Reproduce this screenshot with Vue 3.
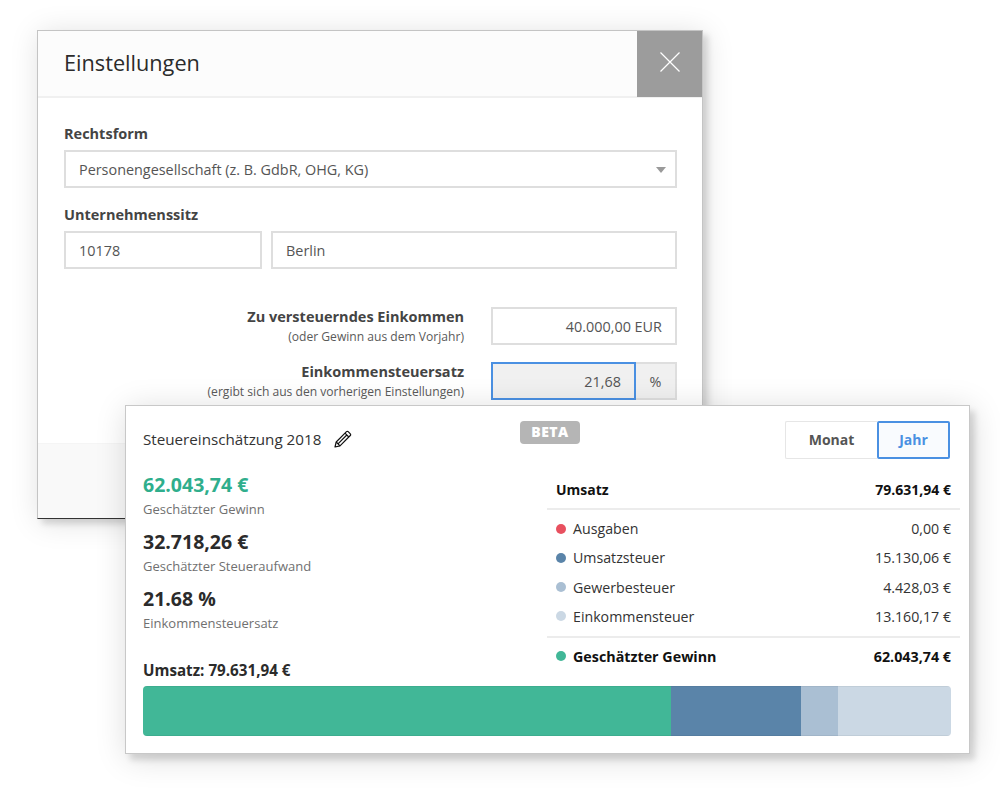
<script setup>
const rows = [
  { label: 'Ausgaben', value: '0,00 €', color: '#e8505f' },
  { label: 'Umsatzsteuer', value: '15.130,06 €', color: '#5a84a9' },
  { label: 'Gewerbesteuer', value: '4.428,03 €', color: '#aabfd3' },
  { label: 'Einkommensteuer', value: '13.160,17 €', color: '#cbd8e4' },
]
const stats = [
  { value: '62.043,74 €', label: 'Geschätzter Gewinn', green: true },
  { value: '32.718,26 €', label: 'Geschätzter Steueraufwand' },
  { value: '21.68 %', label: 'Einkommensteuersatz' },
]
const segments = [
  { w: 528, color: '#41b797' },
  { w: 130, color: '#5a84a9' },
  { w: 37, color: '#aabfd3' },
  { w: 113, color: '#cbd8e4' },
]
</script>

<template>
  <div class="stage">
    <section class="modal">
      <header class="modal-head">
        <h1>Einstellungen</h1>
        <div class="close">
          <svg width="20" height="20" viewBox="0 0 20 20"><path d="M.5.5l19 19M19.500.5l-19 19" stroke="#fff" stroke-width="1.200" fill="none" /></svg>
        </div>
      </header>
      <div class="modal-body">
        <label class="lab">Rechtsform</label>
        <div class="field select">
          <span>Personengesellschaft (z. B. GdbR, OHG, KG)</span>
          <i class="caret"></i>
        </div>
        <label class="lab second">Unternehmenssitz</label>
        <div class="addr">
          <div class="field zip">10178</div>
          <div class="field city">Berlin</div>
        </div>
        <div class="line first">
          <div class="desc"><b>Zu versteuerndes Einkommen</b><small>(oder Gewinn aus dem Vorjahr)</small></div>
          <div class="field amount">40.000,00 EUR</div>
        </div>
        <div class="line">
          <div class="desc"><b>Einkommensteuersatz</b><small>(ergibt sich aus den vorherigen Einstellungen)</small></div>
          <div class="combo">
            <div class="rate">21,68</div>
            <div class="unit">%</div>
          </div>
        </div>
      </div>
      <div class="modal-foot"></div>
    </section>

    <section class="card">
      <div class="card-top">
        <div class="title">
          <span>Steuereinschätzung 2018</span>
          <svg width="18" height="18" viewBox="0 0 18 18" fill="none" stroke="#111" stroke-width="1.200" stroke-linejoin="round">
            <path d="M1 17l1.200-5L12.500 1.700a1.200 1.200 0 0 1 1.700 0l2.100 2.100a1.200 1.200 0 0 1 0 1.700L6 15.800z" />
            <path d="M2.200 12L6 15.800M11 3.200l3.800 3.800M4 13.800l8.800-8.800" />
          </svg>
        </div>
        <span class="beta">BETA</span>
        <div class="toggle">
          <span class="opt">Monat</span>
          <span class="opt active">Jahr</span>
        </div>
      </div>
      <div class="card-main">
        <div class="stats">
          <div v-for="s in stats" :key="s.label" class="stat">
            <strong :class="{ green: s.green }">{{ s.value }}</strong>
            <span>{{ s.label }}</span>
          </div>
          <div class="bar-label">Umsatz: 79.631,94 €</div>
        </div>
        <div class="table">
          <div class="row total"><span>Umsatz</span><span>79.631,94 €</span></div>
          <div class="group">
            <div v-for="r in rows" :key="r.label" class="row">
              <span class="name"><i class="dot" :style="{ background: r.color }"></i>{{ r.label }}</span>
              <span>{{ r.value }}</span>
            </div>
          </div>
          <div class="row profit">
            <span class="name"><i class="dot dot-profit"></i>Geschätzter Gewinn</span>
            <span>62.043,74 €</span>
          </div>
        </div>
      </div>
      <div class="bar">
        <i v-for="s in segments" :key="s.color" :style="{ width: s.w + 'px', background: s.color }"></i>
      </div>
    </section>
  </div>
</template>

<style>
html, body { background: #fff; }
</style>

<style scoped>
.stage {
  position: relative;
  width: 1000px;
  height: 790px;
  padding: 30px 0 0 37px;
  box-sizing: border-box;
  overflow: hidden;
  background: #fff;
  font-family: "Open Sans", sans-serif;
  color: #444;
}
.modal {
  width: 666px;
  height: 489px;
  box-sizing: border-box;
  display: flex;
  flex-direction: column;
  background: #fff;
  border: 1px solid #c4c4c4;
  border-bottom-color: #333;
  box-shadow: 5px 5px 6px rgba(0, 0, 0, .13), 2px 3px 28px rgba(0, 0, 0, .13);
}
.modal-head {
  height: 67px;
  flex: none;
  box-sizing: border-box;
  display: flex;
  justify-content: space-between;
  background: #fcfcfc;
  border-bottom: 2px solid #f0f0f0;
}
h1 {
  margin: 0;
  padding: 15px 0 0 26px;
  font-size: 21.700px;
  line-height: 34px;
  font-weight: 400;
  color: #2b2b2b;
}
.close {
  width: 65px;
  height: 66px;
  display: flex;
  align-items: center;
  justify-content: center;
  padding: 0 0 4px 1px;
  box-sizing: border-box;
  background: #9c9c9c;
}
.modal-body { flex: 1; padding: 26px 25px 0 26px; }
.lab {
  display: block;
  font-size: 14.500px;
  line-height: 20px;
  font-weight: 700;
  color: #444;
  margin-bottom: 6px;
}
.lab.second { margin-top: 17px; }
.field {
  height: 38px;
  box-sizing: border-box;
  border: 2px solid #dedede;
  padding: 0 13px;
  display: flex;
  align-items: center;
  font-size: 14.400px;
  color: #555;
  background: #fff;
}
.select { justify-content: space-between; padding-right: 9px; }
.caret {
  width: 0;
  height: 0;
  border-left: 5.500px solid transparent;
  border-right: 5.500px solid transparent;
  border-top: 6px solid #9a9a9a;
  margin-top: 2px;
}
.addr { display: flex; gap: 9px; }
.zip { width: 198px; flex: none; }
.city { flex: 1; }
.line { display: flex; justify-content: flex-end; align-items: flex-start; gap: 27px; margin-top: 15px; }
.line.first { margin-top: 38px; }
.desc { display: flex; flex-direction: column; align-items: flex-end; }
.desc b { font-size: 14.500px; line-height: 19px; color: #444; }
.desc small { font-size: 12.100px; line-height: 21px; color: #5a5a5a; }
.amount { width: 186px; justify-content: flex-end; }
.combo { width: 186px; height: 38px; display: flex; font-size: 14.400px; color: #555; }
.rate {
  width: 145px;
  box-sizing: border-box;
  border: 2px solid #4a90e2;
  background: #f0f0f0;
  display: flex;
  align-items: center;
  justify-content: flex-end;
  padding-right: 13px;
}
.unit {
  flex: 1;
  box-sizing: border-box;
  background: #f0f0f0;
  border: 2px solid #dedede;
  border-left: 0;
  display: flex;
  align-items: center;
  justify-content: center;
}
.modal-foot { height: 75px; flex: none; background: #f9f9f9; border-top: 1px solid #f5f5f5; box-sizing: border-box; }

.card {
  position: absolute;
  left: 125px;
  top: 405px;
  width: 845px;
  height: 349px;
  box-sizing: border-box;
  padding: 0 18px 17px 17px;
  background: #fff;
  border: 1px solid #c8c8c8;
  box-shadow: 5px 6px 6px rgba(0, 0, 0, .13), 2px 4px 30px rgba(0, 0, 0, .15);
  display: flex;
  flex-direction: column;
}
.card-top { position: relative; height: 52px; flex: none; display: flex; justify-content: space-between; align-items: flex-start; padding-right: 1px; }
.title { display: flex; align-items: center; gap: 13px; padding-top: 23px; font-size: 15.200px; line-height: 20px; color: #333; }
.beta {
  position: absolute;
  left: 377px;
  top: 15px;
  width: 60px;
  height: 23px;
  box-sizing: border-box;
  text-align: center;
  border-radius: 4px;
  background: #b5b5b5;
  color: #fff;
  font-size: 14px;
  line-height: 22px;
  font-weight: 800;
  letter-spacing: .5px;
}
.toggle { display: flex; margin-top: 15px; height: 38px; font-size: 14px; font-weight: 700; }
.opt {
  width: 92px;
  box-sizing: border-box;
  border: 1px solid #e6e6e6;
  border-right: 0;
  border-radius: 2px 0 0 2px;
  display: flex;
  align-items: center;
  justify-content: center;
  padding-bottom: 2px;
  color: #555;
}
.opt.active {
  width: 73px;
  border: 2px solid #4a90e2;
  border-radius: 2px;
  color: #4a90e2;
  background: #f9fbfe;
}
.card-main { flex: 1; min-height: 0; display: flex; justify-content: space-between; }
.stats { display: flex; flex-direction: column; gap: 9px; padding-top: 13px; }
.stat { display: flex; flex-direction: column; }
.stat strong { font-size: 19.500px; line-height: 27px; font-weight: 700; color: #2b2b2b; }
.stat strong.green { color: #2fae8c; }
.stat span { font-size: 13px; line-height: 20px; margin-top: 1px; color: #707070; }
.table { width: 413px; margin-right: -9px; font-size: 14.200px; color: #333; }
.row { display: flex; justify-content: space-between; padding: 0 9px; height: 29.250px; align-items: center; }
.row.total { height: 38px; margin-top: 12px; font-weight: 700; color: #111; font-size: 14px; }
.group { border-top: 2px solid #ececec; border-bottom: 2px solid #ececec; padding: 4px 0 5px; }
.row.profit { height: 36px; font-weight: 700; color: #111; font-size: 14.300px; }
.name { display: flex; align-items: center; gap: 7px; }
.dot { width: 10px; height: 10px; border-radius: 50%; }
.dot-profit { background: #41b797; }
.bar-label { margin-top: auto; font-size: 15.200px; line-height: 20px; font-weight: 700; color: #2b2b2b; }
.bar { height: 50px; margin-top: 6px; flex: none; display: flex; border-radius: 4px; overflow: hidden; }
.bar i { display: block; height: 100%; flex: 1 0 auto; box-shadow: inset 0 1px rgba(0, 0, 0, .05), inset 0 -1px rgba(0, 0, 0, .05); }
</style>
